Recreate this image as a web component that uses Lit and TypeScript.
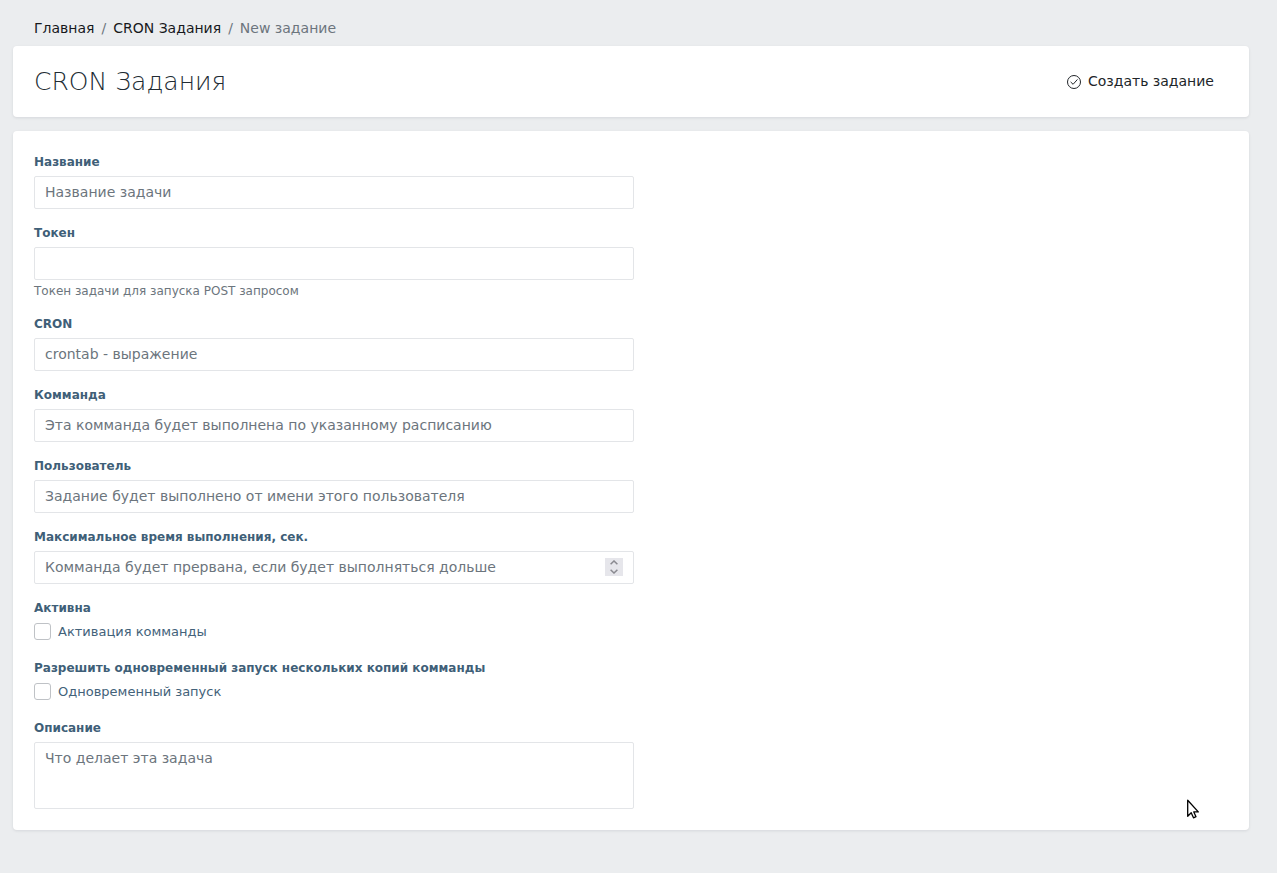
import { LitElement, html, css, svg } from "lit";
import { customElement } from "lit/decorators.js";

const chevron = (d: string) => html`<svg width="8" height="5" viewBox="0 0 8 5" aria-hidden="true">
  ${svg`<path d=${d} fill="none" stroke="#8a8a90" stroke-width="1.5" />`}
</svg>`;

@customElement("app-root")
export class AppRoot extends LitElement {
  static styles = css`
    :host {
      display: block;
      box-sizing: border-box;
      min-height: 100vh;
      padding: 18px 28px 43px 13px;
      background: #ebedef;
      color: #21252a;
      font: 14px/20px "DejaVu Sans", sans-serif;
    }
    * {
      box-sizing: border-box;
    }
    .crumbs {
      display: flex;
      gap: 7px;
      margin: 0;
      padding: 0 21px 8px;
      list-style: none;
      color: #6c757d;
    }
    .crumbs a {
      color: #17191c;
      text-decoration: none;
    }
    .crumb {
      display: flex;
      gap: 7px;
    }
    .card {
      background: #fff;
      border-radius: 4px;
      box-shadow: 0 1px 3px rgba(20, 30, 50, 0.1);
      padding: 21px;
    }
    .head {
      display: flex;
      align-items: center;
      justify-content: space-between;
      margin-bottom: 14px;
      padding: 19px 35px 19px 21px;
    }
    .title {
      margin: 0;
      color: #212b33;
      font-size: 25px;
      line-height: 33px;
      font-weight: 200;
    }
    .create {
      display: flex;
      align-items: flex-end;
      gap: 7px;
      padding: 0 0 2px;
      border: 0;
      background: none;
      color: #212529;
      font: inherit;
      cursor: pointer;
    }
    .check-icon {
      margin-bottom: 2px;
    }
    .form {
      display: flex;
      flex-direction: column;
      gap: 14px;
      max-width: 600px;
      color: #43627a;
    }
    .group {
      display: flex;
      flex-direction: column;
      min-width: 0;
    }
    .label {
      margin-bottom: 4px;
      color: #3f5f78;
      font-size: 12px;
      line-height: 20px;
      font-weight: 700;
    }
    .control {
      display: block;
      width: 100%;
      height: 33px;
      margin: 0;
      padding: 4px 10px 6px;
      border: 1px solid #e3e5e8;
      border-radius: 2px;
      background: #fff;
      color: #43627a;
      font: 14px/20px "DejaVu Sans", sans-serif;
    }
    .area {
      height: 67px;
      padding: 5px 10px;
      resize: none;
    }
    .control::placeholder,
    .bare::placeholder {
      color: #6c757d;
      opacity: 1;
    }
    .number {
      display: flex;
      align-items: center;
    }
    .bare {
      flex: 1;
      min-width: 0;
      padding: 0;
      border: 0;
      outline: 0;
      background: none;
      color: inherit;
      font: inherit;
      appearance: textfield;
    }
    .bare::-webkit-inner-spin-button {
      display: none;
    }
    .spin {
      display: flex;
      flex-direction: column;
      width: 18px;
      background: #e6e6eb;
    }
    .step {
      display: flex;
      align-items: center;
      justify-content: center;
      height: 9px;
      padding: 0;
      border: 0;
      background: none;
    }
    .help {
      margin-top: 2px;
      color: #6c757d;
      font-size: 12px;
      line-height: 18px;
    }
    .check {
      display: flex;
      align-items: flex-start;
      gap: 7px;
      margin-bottom: 2px;
      font-size: 13px;
      line-height: 20px;
    }
    .box {
      appearance: none;
      width: 17px;
      height: 17px;
      margin: 1px 0 0;
      border: 1px solid #bfc2c6;
      border-radius: 3px;
      background: #fff;
    }
    .box:checked {
      background: #43627a;
    }
    .cursor {
      position: absolute;
      left: 1187px;
      top: 799px;
      pointer-events: none;
    }
  `;

  private field(id: string, label: string, placeholder = "", help = "") {
    return html`<div class="group">
      <label class="label" for=${id}>${label}</label>
      <input class="control" id=${id} type="text" placeholder=${placeholder} />
      ${help ? html`<span class="help">${help}</span>` : ""}
    </div>`;
  }

  private check(id: string, title: string, label: string) {
    return html`<div class="group" role="group" aria-labelledby="${id}-title">
      <span class="label" id="${id}-title">${title}</span>
      <label class="check" for=${id}><input class="box" id=${id} type="checkbox" />${label}</label>
    </div>`;
  }

  private step(direction: number) {
    const input = this.renderRoot.querySelector<HTMLInputElement>("#timeout")!;
    direction > 0 ? input.stepUp() : input.stepDown();
  }

  render() {
    return html`
      <nav aria-label="Breadcrumb">
        <ol class="crumbs">
          <li><a href="#">Главная</a></li>
          <li class="crumb"><span>/</span><a href="#">CRON Задания</a></li>
          <li class="crumb"><span>/</span><span>New задание</span></li>
        </ol>
      </nav>
      <header class="card head">
        <h1 class="title">CRON Задания</h1>
        <button class="create" type="submit" form="task">
          <svg class="check-icon" width="14" height="15" viewBox="0 0 14 15" fill="none" stroke="#212529" aria-hidden="true">
            <circle cx="7" cy="8" r="6.5" />
            <path d="M3.9 8.2 6.1 10.3 10.2 5.7" stroke-linecap="round" stroke-linejoin="round" />
          </svg>
          Создать задание
        </button>
      </header>
      <main class="card">
        <form class="form" id="task" @submit=${(e: Event) => e.preventDefault()}>
          ${this.field("name", "Название", "Название задачи")}
          ${this.field("token", "Токен", "", "Токен задачи для запуска POST запросом")}
          ${this.field("cron", "CRON", "crontab - выражение")}
          ${this.field("command", "Комманда", "Эта комманда будет выполнена по указанному расписанию")}
          ${this.field("user", "Пользователь", "Задание будет выполнено от имени этого пользователя")}
          <div class="group">
            <label class="label" for="timeout">Максимальное время выполнения, сек.</label>
            <div class="control number">
              <input class="bare" id="timeout" type="number" placeholder="Комманда будет прервана, если будет выполняться дольше" />
              <span class="spin">
                <button class="step" type="button" aria-label="+" @click=${() => this.step(1)}>${chevron("M.6 4.3 4 1 7.4 4.3")}</button>
                <button class="step" type="button" aria-label="−" @click=${() => this.step(-1)}>${chevron("M.6.7 4 4 7.4.7")}</button>
              </span>
            </div>
          </div>
          ${this.check("active", "Активна", "Активация комманды")}
          ${this.check("parallel", "Разрешить одновременный запуск нескольких копий комманды", "Одновременный запуск")}
          <div class="group">
            <label class="label" for="about">Описание</label>
            <textarea class="control area" id="about" placeholder="Что делает эта задача"></textarea>
          </div>
        </form>
      </main>
      <svg class="cursor" width="12" height="20" viewBox="0 0 12 20" aria-hidden="true">
        <path d="M.7 1.2V17.3L4.2 13.8 6.5 18.8 9 17.7 6.8 12.9H11.3Z" fill="#fff" stroke="#000" stroke-width="1.3" stroke-linejoin="round" />
      </svg>
    `;
  }
}
